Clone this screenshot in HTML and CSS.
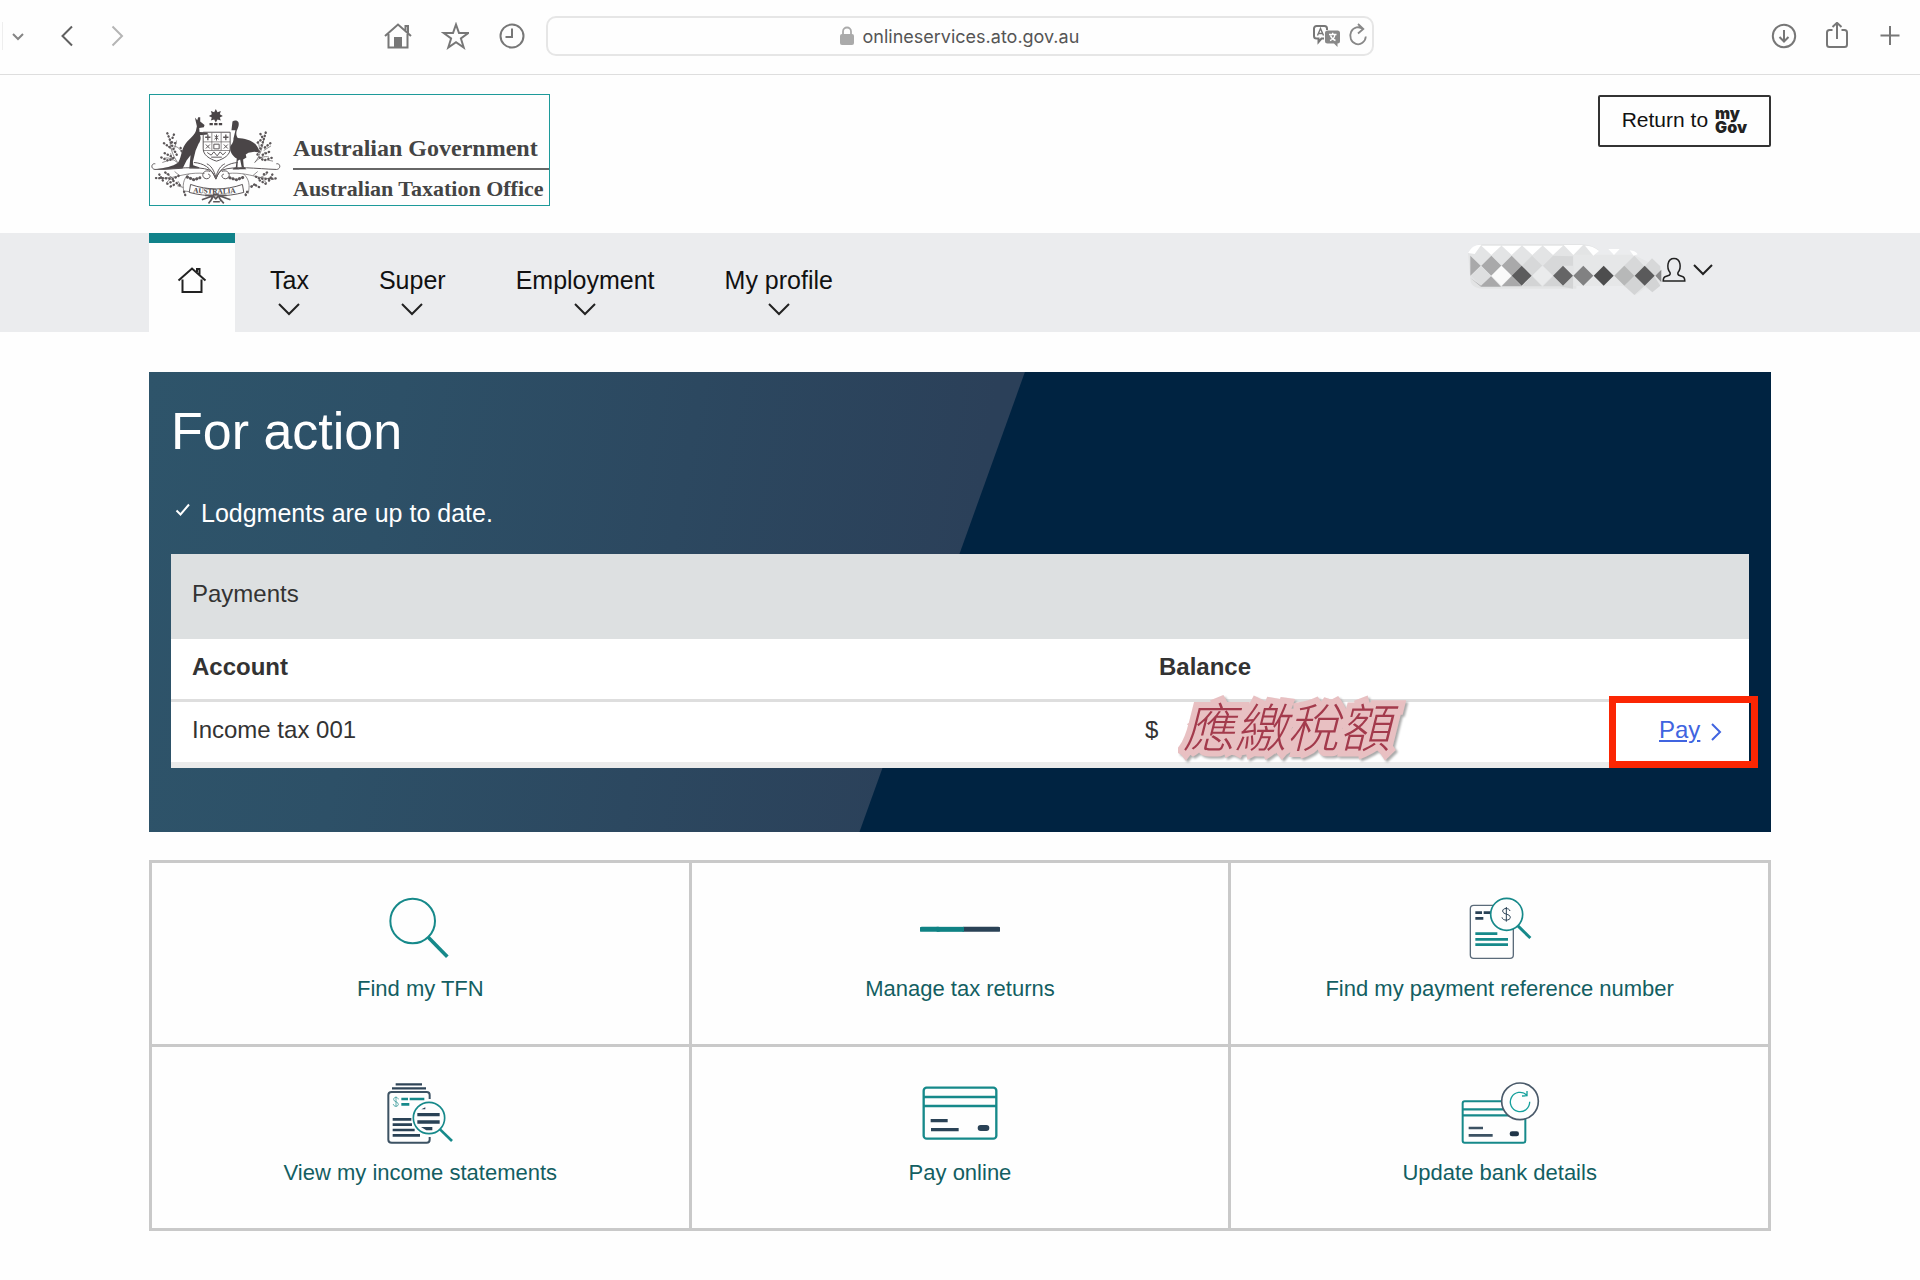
FILE: index.html
```html
<!DOCTYPE html>
<html lang="en">
<head>
    <meta charset="UTF-8">
    <meta name="viewport" content="width=device-width, initial-scale=1.0">
    <title>ATO online services</title>
    <link rel="stylesheet" href="styles.css">
</head>
<body>

    <!-- Browser toolbar -->
    <div class="toolbar">
        <div class="toolbar-left">
            <div class="tool-group history">
                <button class="tool" aria-label="Tab groups"><svg viewBox="0 0 28 28"><path d="M10 12l5 5 5-5" stroke="#858585" stroke-width="2"/></svg></button>
                <button class="tool" aria-label="Back"><svg viewBox="0 0 28 28"><path d="M19 4.500L9.500 14l9.500 9.500" stroke="#606060"/></svg></button>
                <button class="tool" aria-label="Forward"><svg viewBox="0 0 28 28"><path d="M9.500 4.500L19 14l-9.500 9.500" stroke="#b5b5b5"/></svg></button>
            </div>
            <div class="tool-group shortcuts">
                <button class="tool" aria-label="Home">
                    <svg viewBox="0 0 28 28"><path d="M1 14L14 2.500 27 14M4.500 12v13.500h19V12M21.500 8.500V4h2.500v7"/><path d="M11 25v-9h6v9z" fill="#777"/></svg>
                </button>
                <button class="tool" aria-label="Favourites">
                    <svg viewBox="0 0 28 28"><path d="M15 2.500l3 8.500h9.300l-7.400 5.500 2.800 9L15 20.200l-7.700 5.300 2.800-9L2.700 11H12z"/></svg>
                </button>
                <button class="tool" aria-label="Recent">
                    <svg viewBox="0 0 28 28"><circle cx="14" cy="14" r="11.500"/><path d="M14 6.500V15H7.500"/></svg>
                </button>
            </div>
        </div>
        <div class="address">
            <div class="address-field">
                <svg class="lock" viewBox="0 0 14 20"><rect x="0" y="8" width="14" height="11" rx="2" fill="#aaa"/><path d="M3 9V5.500a4 4 0 0 1 8 0V9" fill="none" stroke="#aaa" stroke-width="1.800"/></svg>
                <input class="url" type="text" value="onlineservices.ato.gov.au" aria-label="Address">
            </div>
            <div class="address-tools">
                <button class="tool" aria-label="Translate">
                    <svg viewBox="0 0 28 28"><path d="M3.500 4h8a2.500 2.500 0 0 1 2.500 2.500V8M11 16.500H8.500L5.500 20v-3.500h-2A2.500 2.500 0 0 1 1 14V6.500A2.500 2.500 0 0 1 3.500 4"/><path d="M4.500 13.500L7.500 6.500l3 7M5.500 11.500h4" stroke-width="1.400"/><path d="M14.500 8.500h10A2.500 2.500 0 0 1 27 11v8a2.500 2.500 0 0 1-2.500 2.500V25l-3.500-3.500h-6.500A2.500 2.500 0 0 1 12 19v-8a2.500 2.500 0 0 1 2.500-2.500z" fill="#888" stroke="none"/><path d="M16 12.500h7.500M19.700 10.700v1.800M17 18.500c3-1 4.500-3 5-6M17.500 13.500c.8 2.500 2.500 4 5 5" stroke="#fff" stroke-width="1.400"/></svg>
                </button>
                <button class="tool" aria-label="Reload">
                    <svg viewBox="0 0 28 28"><path d="M19 7.200a7.800 8.500 0 1 0 2.800 7.300M14 2l5.300 5-5.300 4.500" stroke="#888" stroke-width="1.800"/></svg>
                </button>
            </div>
        </div>
        <div class="tool-group actions">
            <button class="tool" aria-label="Downloads"><svg viewBox="0 0 28 28"><circle cx="14" cy="14" r="11.200"/><path d="M14 8v11M9.500 15l4.500 4.500 4.500-4.500"/></svg></button>
            <button class="tool" aria-label="Share"><svg viewBox="0 0 28 28"><path d="M9.500 8H6.500a2.500 2.500 0 0 0-2.500 2.500v12A2.500 2.500 0 0 0 6.500 25h15a2.500 2.500 0 0 0 2.500-2.500v-12A2.500 2.500 0 0 0 21.500 8h-3M14 17V1M9.500 5L14 .800 18.500 5"/></svg></button>
            <button class="tool" aria-label="New tab"><svg viewBox="0 0 28 28"><path d="M14 4v19M4.500 13.500h19"/></svg></button>
        </div>
    </div>

    <header class="site-header">
        <a class="logo" href="#">
            <!-- Coat of arms -->
            <svg class="crest" viewBox="28 55 400 290" aria-hidden="true">
                <g fill="#4a4547">
                    <path d="M226 57l5 10 10-4-3 10 9 5-9 5 3 9-10-3-5 9-5-9-10 3 3-9-9-5 9-5-3-10 10 4z"/>
                    <path d="M207 99h10v7h-10zM221 99h10v7h-10zM235 99h10v7h-10z"/>
                    <!-- kangaroo -->
                    <path d="M163 83l7 8 3-9 6 0 0 13 13 10-2 7-14 2 1 12 24 2 1 6-24 2c5 8 1 19-4 26l-9 21-8 33 1 10 18 6v4h-30l4-40-12 16-12 24c-26 3-56 5-82 2 30-3 52-8 68-19 9-12 10-35 18-50 11-20 30-30 36-46l3-14z"/>
                    <!-- emu -->
                    <path d="M276 95c6-5 15-4 18 2 3 9-2 18-5 25-3 9-1 18 3 22 18 1 42 6 54 20 6 7 12 17 10 24l-14-2-18 3-8 5 2 9-10 6 2 21 8 8h-24v-4l10-1-5-24-7 4-1 20 6 6h-20v-3l9-4 3-26c-13-7-21-21-20-35 5-9 11-14 10-25l6-25-12 0z"/>
                </g>
                <g fill="none" stroke="#5c5759" stroke-width="3">
                    <path d="M188 127h81v50c0 18-18 30-41 37-22-7-40-19-40-37z"/>
                    <path d="M214 128v54M242 128v54M188 156h81M188 182h81" stroke-width="2"/>
                    <path d="M202 134v17M194 142h16M256 134v17M248 142h16" stroke-width="4"/>
                    <path d="M228 134v18M222 138l12 10M234 138l-12 10M196 164l12 12M208 164l-12 12M220 163h16v14h-16zM250 164l12 12M262 164l-12 12M200 188l12 8 8-10 10 12 9-12 8 9 9-8M212 202h32" stroke-width="3"/>
                    <path d="M44 222c-12-3-15 15-1 17 62-2 126-12 165 2 10 6 13 15 18 27 5-12 8-21 18-27 39-14 103-4 165-2 14-2 11-20-1-17"/>
                    <path d="M160 218c27 2 52 14 66 50 14-36 39-48 66-50M199 222c12 5 21 18 27 40 6-22 15-35 27-40"/>
                    <path d="M209 245c-24-9-30 20-11 22 12 0 14-13 5-14M244 245c24-9 30 20 11 22-12 0-14-13-5-14"/>
                    <!-- wattle branches -->
                    <path d="M111 218c-13-19-23-42-23-69M70 206c12-5 29 1 44 16M81 168l17 14M102 176l6-24M65 218l18-6M95 212l-5-22M122 184c-6-10-14-14-23-16M344 218c13-19 23-42 26-70M386 202c-12-5-29 1-44 16M392 168l-22 14M358 178l-4-22M398 214l-20-4M362 206l12-20" stroke-width="2"/>
                    <path d="M192 251c-38-4-70 6-98 12l-42 4M94 263l-22-14M94 263l-18 17M116 257l-14-12M122 290l-10-16M145 252c-18 16-20 36-14 60M128 293l-18-5M132 304l18 2M262 251c38-4 70 6 98 12l42 6M360 263l20-10M360 263l20 17M338 257l14-12M309 252c18 16 20 36 14 60M328 290l18-6M324 304l-12 10" stroke-width="2"/>
                </g>
                <g fill="none" stroke="#5c5759" stroke-width="7" stroke-dasharray="1 9" stroke-linecap="round">
                    <path d="M80 130l8 20 8 22 14 26M104 160l-14-4M120 174l6 18M70 160l20 14M62 203l22 10 20-12M376 128l-7 24-10 28-12 22M352 158l10-8M390 160l-18 14M394 204l-24 8-16-12"/>
                    <path d="M46 265l26 0 24 3 18-10M74 248l16 10M80 282l22-10M108 280l12 8M134 316l-4-12M406 266l-26 2-24-2-14-8M380 248l-14 8M376 282l-18-10M342 284l-10 8M316 316l6-14"/>
                    <path d="M72 190l20 10M100 134l-6 14M386 186l-22 10M360 132l8 14M56 254l14 24M396 254l-14 26M90 290l16-8M356 292l-14-8"/>
                    <path d="M140 262l20 8 18-6M268 264l20 6 22-8" stroke-width="9"/>
                </g>
                <!-- scroll -->
                <path d="M150 284c50 18 106 18 156 0l4 24c-50 14-112 14-164 0z" fill="#fefefe" stroke="#5c5759" stroke-width="3"/>
                <path id="scroll" d="M157 308q70 8 142 0" fill="none"/>
                <text class="scroll-text"><textPath href="#scroll">AUSTRALIA</textPath></text>
                <path d="M194 317l22 0 10 10 10-10 22 0M210 334l10-20 12 0 10 20M184 330l34-12M270 330l-34-12M204 341l12-16M250 341l-14-16M218 336h20" fill="none" stroke="#5c5759" stroke-width="5"/>
            </svg>
            <span class="logo-text">
                <span class="logo-gov">Australian Government</span>
                <span class="logo-ato">Australian Taxation Office</span>
            </span>
        </a>
        <a class="return-link" href="#">
            <span>Return to</span>
            <span class="mygov">my<br>Gov</span>
        </a>
    </header>

    <nav class="main-nav">
        <a class="nav-home" href="#" aria-label="Home">
            <svg viewBox="0 0 30 28"><path d="M1.500 14.500L15 2.500l13.500 12M5.500 13.500V26h19V13.500M20 6V3h2.500v5.500"/></svg>
        </a>
        <a class="nav-item" href="#">Tax<svg viewBox="0 0 22 13"><path d="M1 1l10 10L21 1"/></svg></a>
        <a class="nav-item" href="#">Super<svg viewBox="0 0 22 13"><path d="M1 1l10 10L21 1"/></svg></a>
        <a class="nav-item" href="#">Employment<svg viewBox="0 0 22 13"><path d="M1 1l10 10L21 1"/></svg></a>
        <a class="nav-item" href="#">My profile<svg viewBox="0 0 22 13"><path d="M1 1l10 10L21 1"/></svg></a>
        <button class="user-menu" aria-label="Account menu">
            <svg class="masked-name" viewBox="142 730 585 159">
                <path d="M145 760q12-26 45-27h290q35 0 57 18l-12 16h-55v100H190q-38-2-38-30z" fill="#e3e4e5"/>
                <path d="M462 765h180l80 40v50l-25 20-20-10-30 22-35-28H462z" fill="#e6e7e8"/>
                <path d="M145 760q12-26 40-25l-20 28zM185 738h60l-30 28zM246 738h60l-30 28zM308 738h60l-30 28zM370 738h60l-30 28zM432 736h58l-29 30zM496 738q24 0 42 16l-17 14zM566 748h34l-17 18zM630 752q18 2 24 12l-12 4z" fill="#fff"/>
                <path d="M152 768l31 30-31 30zM215 768l30 30-30 30-30-30zM276 768l30 30-30 30-30-30z" fill="#a9a9aa"/>
                <path d="M307 798l30-30 31 30-31 30zM370 798l30-30 60 2v28l-30 0-30 30zM583 828l61-60 30 32-30 60zM675 800l22-24 25 24v20l-18 8z" fill="#d7d8d9"/>
                <path d="M154 828l30-28 30 28-30 30z" fill="#dedfe0"/>
                <path d="M215 828l30-30 31 30-31 30z" fill="#fafafa"/>
                <path d="M152 835l32 26h60l-30-31-30 28zM246 860l30-31 30 31z" fill="#a9a9aa"/>
                <path d="M307 860l30-31 30 31zM370 860l30-31 30 31 30-31v38l-40-7zM614 858l31-30 30 30-31 28zM676 858l28-28 18 28-24 20z" fill="#d3d4d5"/>
                <path d="M338 828l30-30 31 30-31 30z" fill="#eaebec"/>
                <path d="M276 828l30-30 30 30-30 30z" fill="#5c5c5d"/>
                <path d="M400 828l30-30 30 30-30 30z" fill="#656566"/>
                <path d="M461 828l30-30 30 30-30 30z" fill="#818182"/>
                <path d="M522 828l30-30 30 30-30 30z" fill="#4d4d4e"/>
                <path d="M584 828l30-30 30 30-30 30z" fill="#b7b8b8"/>
                <path d="M645 828l30-30 30 30-30 30z" fill="#5a5a5b"/>
                <path d="M707 828l18-18v38z" fill="#8a8a8b"/>
            </svg>
            <svg class="user-icon" viewBox="0 0 24 26"><path d="M8 15.500C4.500 11 5 1.500 12 1.500s7.500 9.500 4 14c-.5 1.500 0 2.500 1.500 3l3.500 1.200c1.500.6 1.800 1.800 1.800 4.300H1.200c0-2.500.3-3.700 1.800-4.300l3.500-1.200c1.500-.5 2-1.500 1.500-3z"/></svg>
            <svg class="user-chevron" viewBox="0 0 22 13"><path d="M2 2l9 9 9-9"/></svg>
        </button>
    </nav>

    <main>
        <section class="hero">
            <h1>For action</h1>
            <p class="status">
                <svg viewBox="0 0 16 14"><path d="M1.500 7.500l4 4 8.500-10"/></svg>
                Lodgments are up to date.
            </p>
            <table class="payments">
                <caption>Payments</caption>
                <thead>
                    <tr>
                        <th class="col-account" scope="col">Account</th>
                        <th class="col-balance" scope="col">Balance</th>
                        <td class="col-pay"></td>
                    </tr>
                </thead>
                <tbody>
                    <tr>
                        <td>Income tax 001</td>
                        <td class="balance">$<span class="sticker" lang="zh-Hant">應繳稅額</span></td>
                        <td class="pay"><a href="#">Pay</a><svg viewBox="0 0 12 20"><path d="M2 2l8 8-8 8"/></svg></td>
                    </tr>
                </tbody>
            </table>
        </section>

        <!-- Quick links -->
        <ul class="tiles">
            <li><a href="#">
                <svg viewBox="120 81 240 198">
                    <circle cx="218" cy="156" r="67" fill="none" stroke="#16898a" stroke-width="6"/>
                    <path d="M264 204l58 59" stroke="#16898a" stroke-width="11"/>
                </svg>
                Find my TFN
            </a></li>
            <li><a href="#">
                <svg viewBox="120 81 240 198" stroke-width="15" stroke-linecap="round">
                    <path d="M252 181h103" stroke="#2a4256"/>
                    <path d="M125 181h50" stroke="#0f8284"/>
                    <path d="M170 181h82" stroke="#0f8284" stroke-linecap="butt"/>
                </svg>
                Manage tax returns
            </a></li>
            <li><a href="#">
                <svg viewBox="180 81 240 198" fill="none">
                    <rect x="211" y="109" width="129" height="159" rx="10" stroke="#5b6b7a" stroke-width="4"/>
                    <path d="M226 131h20M251 131h22M226 148h24" stroke="#2a4256" stroke-width="8"/>
                    <path d="M226 194h66M226 211h98M226 227h98" stroke="#16898a" stroke-width="8"/>
                    <path d="M353 170l38 37" stroke="#16898a" stroke-width="9"/>
                    <circle cx="320" cy="136" r="48" fill="#fefefe" stroke="#16898a" stroke-width="5"/>
                    <path d="M330 126c-2-10-22-10-22 0 0 11 23 8 23 19 0 11-24 11-25 0M319 114v44" stroke="#2a4256" stroke-width="3"/>
                </svg>
                Find my payment reference number
            </a></li>
            <li><a href="#">
                <svg viewBox="120 633 240 198" fill="none">
                    <path d="M167 646h79M156 658h102" stroke="#2f4558" stroke-width="7"/>
                    <path d="M269 690v-12q0-9-9-9H155q-10 0-10 9v134q0 9 10 9h105q9 0 9-9v-8" stroke="#3c5263" stroke-width="6"/>
                    <path d="M158 751h56M158 767h58M158 783h66M158 799h82" stroke="#2a4256" stroke-width="8"/>
                    <path d="M184 690h20M209 690h44M184 706h24" stroke="#16898a" stroke-width="8"/>
                    <path d="M175 691c-1-8-14-8-14 0 0 9 14 6 14 15 0 8-15 8-15-1M168 683v30" stroke="#16898a" stroke-width="2"/>
                    <circle cx="267" cy="747" r="47" fill="#fefefe" stroke="#16898a" stroke-width="5"/>
                    <path d="M232 737h67M232 759h67" stroke="#2a4256" stroke-width="10"/>
                    <path d="M244 721l12-6v6zM243 774h34v10h-18z" fill="#2a4256"/>
                    <path d="M300 781l36 35" stroke="#16898a" stroke-width="8"/>
                </svg>
                View my income statements
            </a></li>
            <li><a href="#">
                <svg viewBox="120 633 240 198" fill="none">
                    <rect x="131" y="656" width="218" height="153" rx="9" stroke="#16898a" stroke-width="7"/>
                    <path d="M131 684h218M131 711h218" stroke="#16898a" stroke-width="8"/>
                    <path d="M152 755h51M153 782h83" stroke="#2a4256" stroke-width="10"/>
                    <rect x="293" y="768" width="35" height="18" rx="9" fill="#2a4256"/>
                </svg>
                Pay online
            </a></li>
            <li><a href="#">
                <svg viewBox="180 633 240 198" fill="none">
                    <rect x="188" y="697" width="188" height="124" rx="6" stroke="#16898a" stroke-width="6"/>
                    <path d="M188 721h150M188 739h160" stroke="#16898a" stroke-width="7"/>
                    <path d="M206 777h43M206 799h72" stroke="#3c5263" stroke-width="8"/>
                    <rect x="329" y="787" width="28" height="15" rx="7" fill="#1f3548"/>
                    <circle cx="360" cy="697" r="55" fill="#fefefe" stroke="#4a5a6a" stroke-width="5"/>
                    <path d="M380 678a29 29 0 1 0 9 20M381 666v14l-15 1" stroke="#16a09c" stroke-width="4"/>
                </svg>
                Update bank details
            </a></li>
        </ul>
    </main>

</body>
</html>
```
FILE: styles.css
```css
* {
    box-sizing: border-box;
}
body {
    margin: 0;
    background-color: #fefefe;
    color: #333;
    font-family: "Liberation Sans", Arial, sans-serif;
    font-size: 24px;
}
a {
    color: inherit;
    text-decoration: none;
}
button {
    padding: 0;
    border: none;
    background: none;
    cursor: pointer;
}
svg {
    display: block;
    flex: none;
}

/* Browser toolbar */
.toolbar {
    display: grid;
    grid-template-columns: 546px 1fr 546px;
    align-items: center;
    height: 75px;
    padding-bottom: 2px;
    border-bottom: 1px solid #dedede;
}
.toolbar-left {
    display: flex;
    justify-content: space-between;
}
.tool-group {
    display: flex;
    align-items: center;
}
.history {
    gap: 22px;
    margin-left: 2px;
    border-left: 1px solid #eee;
}
.shortcuts {
    gap: 29px;
    padding-right: 20px;
}
.actions {
    gap: 25px;
    justify-content: flex-end;
    padding-right: 16px;
}
.tool svg {
    width: 28px;
    height: 28px;
    fill: none;
    stroke: #777;
    stroke-width: 2;
}
.address {
    display: grid;
    grid-template-columns: 1fr auto 1fr;
    align-items: center;
    height: 40px;
    border: 2px solid #e6e6e6;
    border-radius: 10px;
}
.address-field {
    display: flex;
    grid-column: 2;
    gap: 9px;
    align-items: center;
}
.lock {
    width: 14px;
    height: 20px;
}
.url {
    width: 218px;
    padding: 0;
    border: none;
    background: none;
    color: #555;
    font-family: Inter, sans-serif;
    font-size: 18px;
}
.address-tools {
    display: flex;
    gap: 3px;
    justify-content: flex-end;
}

/* Header */
.site-header {
    display: flex;
    justify-content: space-between;
    align-items: flex-start;
    padding: 19px 149px 27px;
}
.logo {
    display: flex;
    align-items: flex-end;
    height: 112px;
    border: 1px solid #1d9a9a;
    color: #444;
    font-family: "Liberation Serif", "Times New Roman", serif;
    font-weight: bold;
    white-space: nowrap;
}
.crest {
    width: 133px;
    height: 97px;
}
.scroll-text {
    fill: #4a4547;
    font-size: 22px;
}
.logo-text {
    display: flex;
    flex-direction: column;
    width: 266px;
    padding-left: 10px;
}
.logo-gov {
    padding-bottom: 6px;
    border-bottom: 2px solid #666;
    font-size: 24px;
    line-height: 28px;
}
.logo-ato {
    padding: 6px 0 3px;
    font-size: 22px;
    line-height: 26px;
}
.return-link {
    display: flex;
    align-items: center;
    gap: 7px;
    height: 52px;
    margin-top: 1px;
    padding: 0 22px 2px;
    border: 2px solid #333;
    border-radius: 2px;
    color: #111;
    font-size: 21px;
    line-height: 24px;
}
.mygov {
    color: #222;
    font-family: Inter, sans-serif;
    font-size: 16px;
    font-weight: 900;
    line-height: 14px;
}

/* Navigation */
.main-nav {
    display: flex;
    align-items: stretch;
    height: 99px;
    padding: 0 149px;
    background-color: #ebecee;
    color: #111;
    font-size: 25px;
}
.nav-home {
    display: flex;
    justify-content: center;
    width: 86px;
    padding-top: 23px;
    border-top: 10px solid #10828a;
    background-color: #fefefe;
}
.nav-home svg {
    width: 30px;
    height: 28px;
}
.nav-item {
    display: flex;
    flex-direction: column;
    align-items: center;
    gap: 9px;
    padding: 33px 35px 0;
    line-height: 28px;
}
.nav-item svg,
.user-chevron {
    width: 22px;
    height: 13px;
}
.main-nav svg {
    fill: none;
    stroke: #222;
    stroke-width: 2;
}
.user-menu {
    display: flex;
    align-items: center;
    align-self: flex-start;
    margin: 10px 57px 0 auto;
}
.main-nav .masked-name {
    width: 195px;
    height: 53px;
    stroke: none;
}
.main-nav .user-icon {
    width: 24px;
    height: 26px;
    stroke-width: 1.500;
}
.user-chevron {
    margin-left: 6px;
}

/* For action panel */
main {
    padding: 40px 149px;
}
.hero {
    position: relative;
    z-index: 0;
    padding: 29px 22px 64px;
    background-color: #002341;
    color: #fff;
}
.hero::before {
    content: "";
    position: absolute;
    inset: 0;
    z-index: -1;
    background: linear-gradient(100deg, #2e546a 0%, #2d5067 15%, #2b4059 50%);
    clip-path: polygon(0 0, 54% 0, 43.8% 100%, 0 100%);
}
h1 {
    margin: 0 0 37px;
    font-size: 52px;
    font-weight: normal;
    line-height: 60px;
}
.status {
    display: flex;
    gap: 10px;
    margin: 0 0 26px;
    padding-left: 4px;
    font-size: 25px;
    line-height: 30px;
}
.status svg {
    width: 16px;
    height: 14px;
    margin-top: 5px;
    fill: none;
    stroke: #fff;
    stroke-width: 2;
}
.payments {
    width: 100%;
    border-spacing: 0;
    border-bottom: 6px solid #ebebeb;
    background-color: #fff;
    color: #333;
    table-layout: fixed;
    text-align: left;
}
.payments caption {
    padding: 26px 21px 31px;
    background-color: #dde0e1;
    text-align: left;
    line-height: 28px;
}
.payments th,
.payments td {
    padding: 14px 0 18px;
    line-height: 28px;
}
.payments thead th,
.payments thead td {
    border-bottom: 3px solid #dedede;
}
.payments tr > :first-child {
    padding-left: 21px;
}
.col-account {
    width: 974px;
}
.payments .col-balance {
    padding-left: 14px;
}
.col-pay {
    width: 140px;
}
.balance,
.pay {
    position: relative;
}
.sticker {
    position: absolute;
    top: -5px;
    left: 38px;
    color: #a33a4c;
    font-family: "Noto Sans CJK TC", sans-serif;
    font-size: 52px;
    font-style: italic;
    font-weight: 300;
    line-height: 56px;
    white-space: nowrap;
    paint-order: stroke;
    -webkit-text-stroke: 12px #e8c0c2;
    stroke-linejoin: round;
    filter: drop-shadow(2px 2px 1px #aaa);
}
.pay {
    color: #4064e0;
}
.pay a {
    margin-left: 50px;
    text-decoration: underline;
}
.pay svg {
    display: inline-block;
    width: 12px;
    height: 20px;
    margin-left: 10px;
    vertical-align: -4px;
    fill: none;
    stroke: #4064e0;
    stroke-width: 2;
}
/* Red highlight around the pay link */
.pay::after {
    content: "";
    position: absolute;
    inset: -6px -9px -6px 0;
    border: 7px solid #fb2603;
    pointer-events: none;
}

/* Quick link tiles */
.tiles {
    display: grid;
    grid-template-columns: repeat(3, 1fr);
    gap: 3px;
    margin: 28px 0 0;
    padding: 0;
    border: 3px solid #c9c9c9;
    background-color: #c9c9c9;
    list-style: none;
}
.tiles a {
    display: flex;
    flex-direction: column;
    align-items: center;
    gap: 13px;
    padding: 33px 0 41px;
    background-color: #fefefe;
    color: #135e62;
    font-size: 22px;
    line-height: 28px;
}
.tiles svg {
    width: 80px;
    height: 66px;
}
```
